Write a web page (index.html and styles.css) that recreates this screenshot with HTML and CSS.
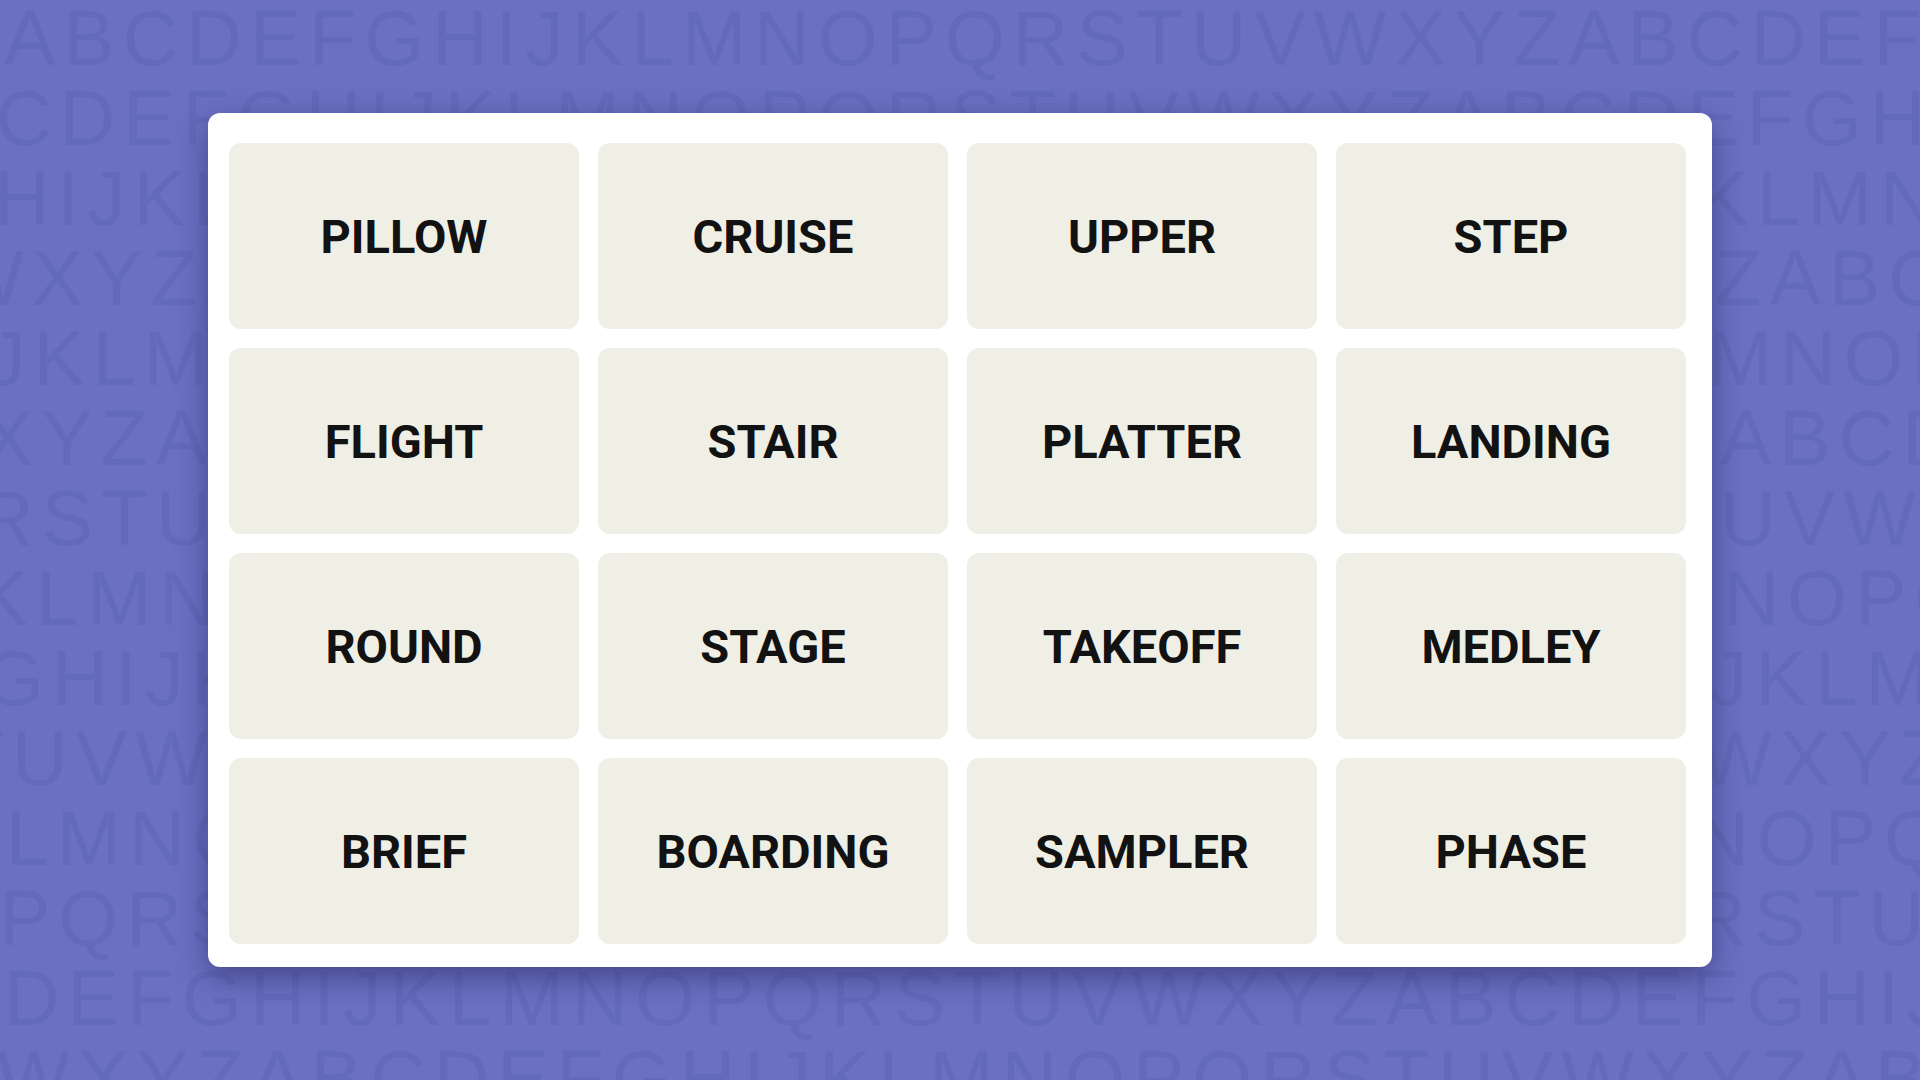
FILE: index.html
```html
<!DOCTYPE html>
<html lang="en">
<head>
  <meta charset="UTF-8" />
  <meta name="viewport" content="width=device-width, initial-scale=1.0"/>
  <title>Connections</title>
  <link rel="stylesheet" href="styles.css">
</head>
<body>

<!-- letter wallpaper behind the board -->
<div class="letters" aria-hidden="true">
  <div class="row">ABCDEFGHIJKLMNOPQRSTUVWXYZABCDEFGH</div>
  <div class="row">CDEFGHIJKLMNOPQRSTUVWXYZABCDEFGHIJ</div>
  <div class="row">HIJKLMNOPQRSTUVWXYZABCDEFGHIJKLMNO</div>
  <div class="row">WXYZABCDEFGHIJKLMNOPQRSTUVWXYZABCD</div>
  <div class="row">JKLMNOPQRSTUVWXYZABCDEFGHIJKLMNOPQ</div>
  <div class="row">XYZABCDEFGHIJKLMNOPQRSTUVWXYZABCDE</div>
  <div class="row">RSTUVWXYZABCDEFGHIJKLMNOPQRSTUVWXY</div>
  <div class="row">KLMNOPQRSTUVWXYZABCDEFGHIJKLMNOPQR</div>
  <div class="row">GHIJKLMNOPQRSTUVWXYZABCDEFGHIJKLMN</div>
  <div class="row">TUVWXYZABCDEFGHIJKLMNOPQRSTUVWXYZA</div>
  <div class="row">LMNOPQRSTUVWXYZABCDEFGHIJKLMNOPQRS</div>
  <div class="row">PQRSTUVWXYZABCDEFGHIJKLMNOPQRSTUVW</div>
  <div class="row">DEFGHIJKLMNOPQRSTUVWXYZABCDEFGHIJK</div>
  <div class="row">WXYZABCDEFGHIJKLMNOPQRSTUVWXYZABCD</div>
</div>

<div class="board">
  <div class="tile">PILLOW</div>
  <div class="tile">CRUISE</div>
  <div class="tile">UPPER</div>
  <div class="tile">STEP</div>
  <div class="tile">FLIGHT</div>
  <div class="tile">STAIR</div>
  <div class="tile">PLATTER</div>
  <div class="tile">LANDING</div>
  <div class="tile">ROUND</div>
  <div class="tile">STAGE</div>
  <div class="tile">TAKEOFF</div>
  <div class="tile">MEDLEY</div>
  <div class="tile">BRIEF</div>
  <div class="tile">BOARDING</div>
  <div class="tile">SAMPLER</div>
  <div class="tile">PHASE</div>
</div>

</body>
</html>
```

FILE: styles.css
```css
body {
  margin: 0;
  height: 100vh;
  background: #6b70c3;
  display: flex;
  justify-content: center;
  align-items: center;
  overflow: hidden;
}

.letters {
  position: absolute;
  inset: 0;
  overflow: hidden;
  margin-top: -2px;
  font-family: "Liberation Sans", Arial, sans-serif;
  font-size: 77px;
  line-height: 80px;
  letter-spacing: 8px;
  color: #646abb;
}
.letters .row {
  white-space: nowrap;
}
/* each line starts at its own point in the alphabet */
.letters .row:nth-child(1)  { margin-left: 4px; }
.letters .row:nth-child(2)  { margin-left: -4px; }
.letters .row:nth-child(3)  { margin-left: -6px; }
.letters .row:nth-child(4)  { margin-left: -49px; }
.letters .row:nth-child(5)  { margin-left: -13px; }
.letters .row:nth-child(6)  { margin-left: -18px; }
.letters .row:nth-child(7)  { margin-left: -22px; }
.letters .row:nth-child(8)  { margin-left: -23px; }
.letters .row:nth-child(9)  { margin-left: -16px; }
.letters .row:nth-child(10) { margin-left: -43px; }
.letters .row:nth-child(11) { margin-left: 6px; }
.letters .row:nth-child(12) { margin-left: -1px; }
.letters .row:nth-child(13) { margin-left: 4px; }
.letters .row:nth-child(14) { margin-left: -3px; }

.board {
  position: relative;
  box-sizing: border-box;
  width: 1504px;
  height: 854px;
  padding: 30px 26px 23px 21px;
  background: #fff;
  border-radius: 12px;
  box-shadow: 0 10px 30px rgba(30, 30, 80, 0.5);
  display: grid;
  grid-template-columns: repeat(4, 1fr);
  grid-template-rows: repeat(4, 1fr);
  gap: 19px;
}

.tile {
  background: #efefe6;
  border-radius: 12px;
  display: flex;
  justify-content: center;
  align-items: center;
  font-family: Roboto, "Liberation Sans", sans-serif;
  font-weight: 700;
  font-size: 47px;
  color: #121212;
}
```
